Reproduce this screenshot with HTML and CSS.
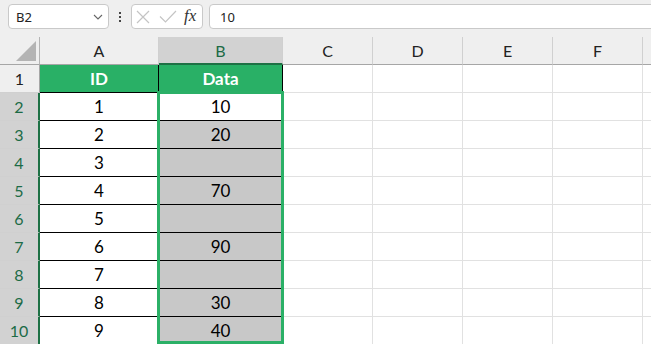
FILE: index.html
```html
<!DOCTYPE html>
<html>
<head>
<meta charset="utf-8">
<link rel="stylesheet" href="styles.css">
</head>
<body>
<div class="topbar">
  <div class="namebox">
    <span class="nb-text">B2</span>
    <svg class="chev" width="10" height="6" viewBox="0 0 10 6"><polyline points="1,1 5,5 9,1" fill="none" stroke="#666" stroke-width="1.1"/></svg>
  </div>
  <div class="dots"><i></i><i></i><i></i></div>
  <div class="fbtns">
    <svg width="14" height="14" viewBox="0 0 14 14"><path d="M1 1 L13 13 M13 1 L1 13" stroke="#c4c4c4" stroke-width="1.2" fill="none"/></svg>
    <svg class="check" width="18" height="13" viewBox="0 0 18 13"><polyline points="1,6.5 6.5,12 17,1" fill="none" stroke="#c4c4c4" stroke-width="1.2"/></svg>
    <span class="fx">fx</span>
  </div>
  <div class="finput">10</div>
</div>

<div class="sheet">
  <div class="corner"><span class="tri"></span></div>
  <div class="ch">A</div>
  <div class="ch sel">B</div>
  <div class="ch">C</div>
  <div class="ch">D</div>
  <div class="ch">E</div>
  <div class="ch">F</div>
  <div class="ch rest"></div>

  <div class="rh">1</div>
  <div class="hd">ID</div>
  <div class="hd">Data</div>
  <div class="c"></div><div class="c"></div><div class="c"></div><div class="c"></div><div class="c rest"></div>

  <div class="rh sel">2</div>
  <div class="tb">1</div>
  <div class="tb act">10</div>
  <div class="c"></div><div class="c"></div><div class="c"></div><div class="c"></div><div class="c rest"></div>

  <div class="rh sel">3</div>
  <div class="tb">2</div>
  <div class="tb g">20</div>
  <div class="c"></div><div class="c"></div><div class="c"></div><div class="c"></div><div class="c rest"></div>

  <div class="rh sel">4</div>
  <div class="tb">3</div>
  <div class="tb g"></div>
  <div class="c"></div><div class="c"></div><div class="c"></div><div class="c"></div><div class="c rest"></div>

  <div class="rh sel">5</div>
  <div class="tb">4</div>
  <div class="tb g">70</div>
  <div class="c"></div><div class="c"></div><div class="c"></div><div class="c"></div><div class="c rest"></div>

  <div class="rh sel">6</div>
  <div class="tb">5</div>
  <div class="tb g"></div>
  <div class="c"></div><div class="c"></div><div class="c"></div><div class="c"></div><div class="c rest"></div>

  <div class="rh sel">7</div>
  <div class="tb">6</div>
  <div class="tb g">90</div>
  <div class="c"></div><div class="c"></div><div class="c"></div><div class="c"></div><div class="c rest"></div>

  <div class="rh sel">8</div>
  <div class="tb">7</div>
  <div class="tb g"></div>
  <div class="c"></div><div class="c"></div><div class="c"></div><div class="c"></div><div class="c rest"></div>

  <div class="rh sel">9</div>
  <div class="tb">8</div>
  <div class="tb g">30</div>
  <div class="c"></div><div class="c"></div><div class="c"></div><div class="c"></div><div class="c rest"></div>

  <div class="rh sel">10</div>
  <div class="tb">9</div>
  <div class="tb g">40</div>
  <div class="c"></div><div class="c"></div><div class="c"></div><div class="c"></div><div class="c rest"></div>

  <div class="selection"></div>
</div>
</body>
</html>
```

FILE: styles.css
```css
* { box-sizing: border-box; }
html, body { margin: 0; padding: 0; }
body {
  width: 651px;
  height: 344px;
  overflow: hidden;
  background: #fff;
  font-family: Lato, "Open Sans", sans-serif;
  color: #000;
}

.topbar {
  height: 37px;
  background: #efefef;
  display: flex;
  align-items: flex-start;
  padding: 4px 0 0 8px;
  font-family: "Noto Sans", "Open Sans", sans-serif;
  font-size: 13px;
  color: #222;
}
.namebox {
  width: 101px;
  height: 25px;
  background: #fff;
  border: 1px solid #c9c9c9;
  border-radius: 4px;
  display: flex;
  align-items: center;
  justify-content: space-between;
  padding: 0 5px 0 7px;
}
.nb-text { padding-top: 1px; }
.dots {
  display: flex;
  flex-direction: column;
  gap: 2px;
  margin: 8px 0 0 10px;
}
.dots i {
  display: block;
  width: 2px;
  height: 2px;
  background: #444;
}
.fbtns {
  margin-left: 10px;
  width: 72px;
  height: 25px;
  background: #fff;
  border: 1px solid #c9c9c9;
  border-radius: 4px;
  display: flex;
  align-items: center;
  padding-left: 4px;
}
.fbtns .check { margin-left: 9px; }
.fx {
  margin-left: 7px;
  font-family: "Liberation Serif", "DejaVu Serif", serif;
  font-style: italic;
  font-size: 17px;
  color: #333;
  line-height: 1;
  padding-bottom: 2px;
}
.finput {
  margin-left: 6px;
  flex: 1;
  height: 25px;
  margin-right: -10px;
  background: #fff;
  border: 1px solid #c9c9c9;
  border-radius: 4px;
  display: flex;
  align-items: center;
  padding: 1px 0 0 10px;
}

.sheet {
  position: relative;
  display: grid;
  grid-template-columns: 40px 119px 124px 90px 90px 90px 90px 1fr;
  grid-template-rows: repeat(11, 28px);
  font-size: 17px;
}
.sheet > div {
  display: flex;
  align-items: center;
  justify-content: center;
  border-right: 1px solid #e1e1e1;
  border-bottom: 1px solid #e1e1e1;
}
.sheet > .corner {
  background: #efefef;
  border-right: 1px solid #b4b4b4;
  border-bottom: 1px solid #a6a6a6;
  position: relative;
}
.tri {
  position: absolute;
  right: 3px;
  bottom: 3px;
  width: 0;
  height: 0;
  border-left: 20px solid transparent;
  border-bottom: 20px solid #b4b4b4;
}
.sheet > .ch {
  background: #efefef;
  border-right: 1px solid #d0d0d0;
  border-bottom: 1px solid #a6a6a6;
  font-size: 16px;
  color: #222;
}
.sheet > .ch.sel {
  background: #d2d2d2;
  color: #1c6b46;
  border-bottom: 2px solid #1e7145;
}
.sheet > .rh {
  background: #efefef;
  border-right: 1px solid #a6a6a6;
  border-bottom: 1px solid #d0d0d0;
  font-size: 16px;
  color: #222;
}
.sheet > .rh.sel {
  background: #d2d2d2;
  color: #1c6b46;
  border-right: 2px solid #1e7145;
}
.sheet > .hd {
  background: #29b066;
  color: #fff;
  font-weight: bold;
  border-right: 1px solid #000;
  border-bottom: 1px solid #000;
}
.sheet > .tb {
  background: #fff;
  border-right: 1px solid #000;
  border-bottom: 1px solid #000;
  align-items: flex-end;
  padding-bottom: 3px;
}
.sheet > .tb.g { background: #c8c8c8; }
.sheet > .rest { border-right: none; }

.sheet > .selection {
  position: absolute;
  left: 157px;
  top: 54px;
  width: 127px;
  height: 253px;
  border: 3px solid #2bb067;
  background: transparent;
  pointer-events: none;
}
```
